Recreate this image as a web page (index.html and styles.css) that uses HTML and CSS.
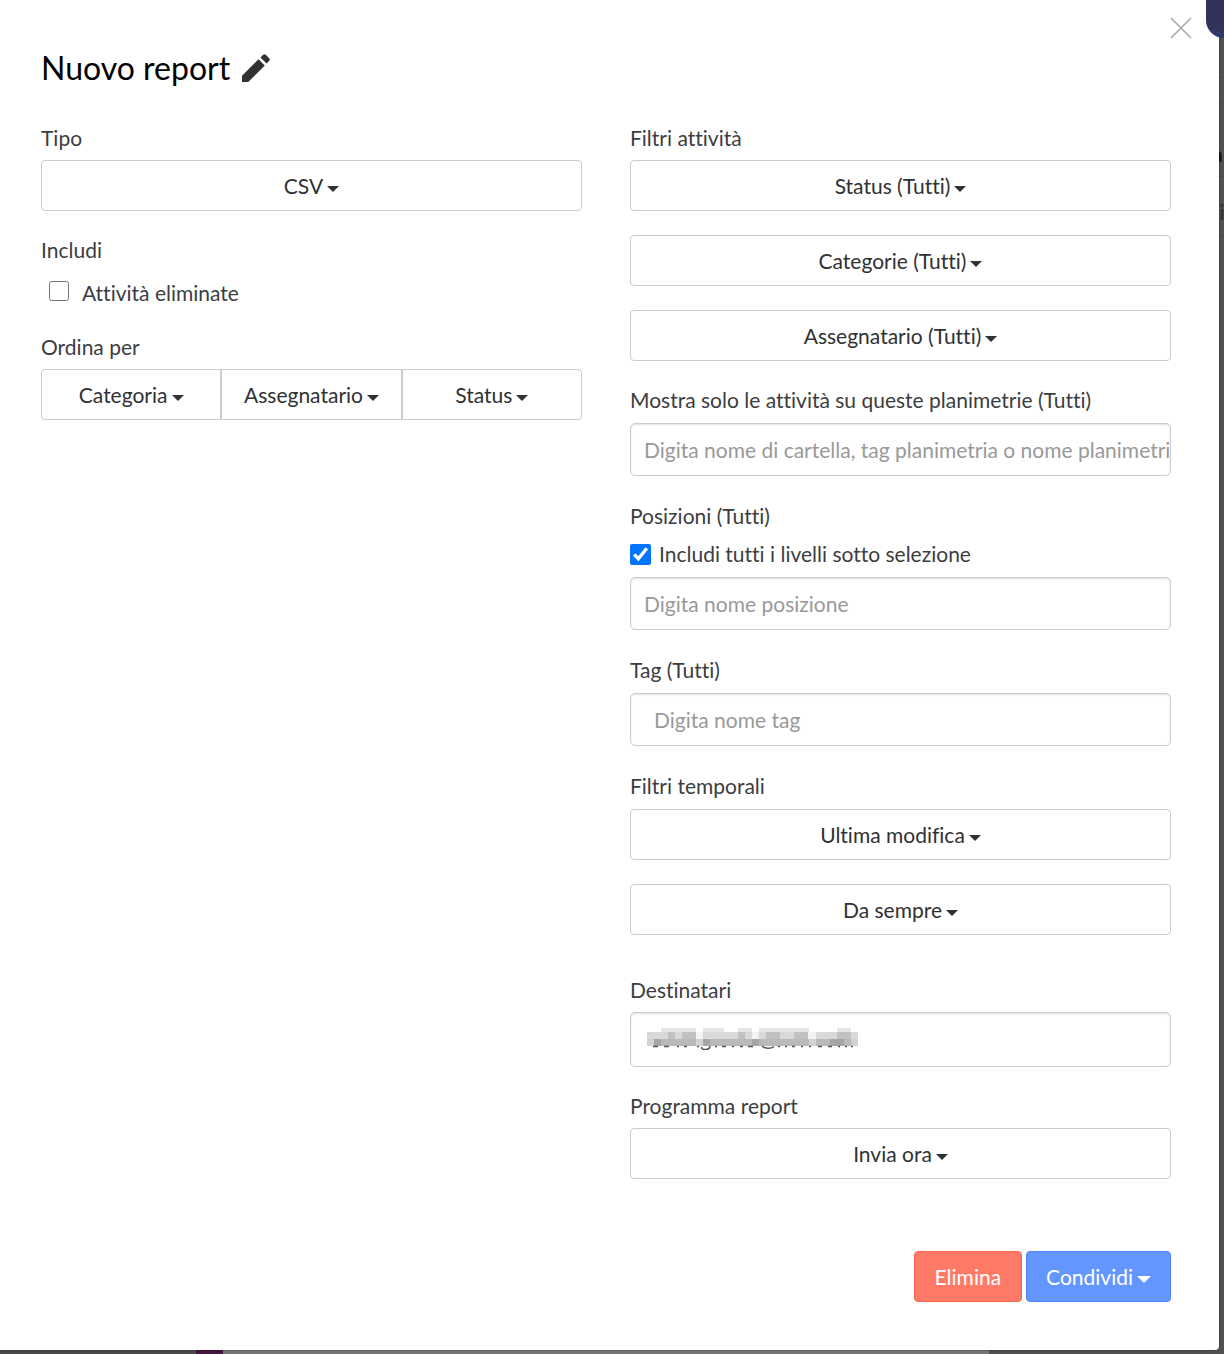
FILE: index.html
```html
<!DOCTYPE html>
<html lang="it">
<head>
    <meta charset="UTF-8">
    <meta name="viewport" content="width=device-width, initial-scale=1.0">
    <title>Nuovo report</title>
    <link rel="stylesheet" href="styles.css">
</head>
<body>

    <!-- pagina dietro la finestra -->
    <div class="backdrop" aria-hidden="true">
        <div class="side">
            <div class="side-row row-top"></div>
            <div class="side-row row-gap"></div>
            <div class="side-row row-name"><b>a</b></div>
            <div class="side-row row-text">ti</div>
        </div>
        <div class="bottom">
            <div class="bottom-nav"></div>
            <div class="bottom-active"></div>
            <div class="bottom-list"></div>
        </div>
    </div>

    <div class="modal" role="dialog" aria-labelledby="title">
        <button type="button" class="close" aria-label="Chiudi">
            <svg width="22" height="22" viewBox="0 0 22 22"><path d="M1 1L21 21M21 1L1 21" stroke="#a9a9a9" stroke-width="1.6" fill="none"/></svg>
        </button>

        <div class="modal-header">
            <h1 id="title">Nuovo report</h1>
            <button type="button" class="edit" aria-label="Modifica nome">
                <svg width="28" height="28" viewBox="0 0 28 28" fill="#303133"><path d="M0 28V21.8L16.6 5.2L22.8 11.4L6.2 28ZM18.4 3.4L21.2 .8Q22.6 -.4 23.8 .8L27.2 4.2Q28.4 5.4 27.2 6.8L24.6 9.6Z"/></svg>
            </button>
        </div>

        <form class="columns">
            <div class="column">
                <div class="group">
                    <label for="type">Tipo</label>
                    <button type="button" class="btn" id="type" aria-haspopup="true">CSV<span class="caret"></span></button>
                </div>
                <div class="group">
                    <div class="heading">Includi</div>
                    <div class="check check-indent">
                        <input type="checkbox" id="deleted">
                        <label for="deleted">Attività eliminate</label>
                    </div>
                </div>
                <div class="group">
                    <div class="heading">Ordina per</div>
                    <div class="btn-group">
                        <button type="button" class="btn" aria-haspopup="true">Categoria<span class="caret"></span></button>
                        <button type="button" class="btn" aria-haspopup="true">Assegnatario<span class="caret"></span></button>
                        <button type="button" class="btn" aria-haspopup="true">Status<span class="caret"></span></button>
                    </div>
                </div>
            </div>

            <div class="column">
                <div class="group stack">
                    <div class="heading">Filtri attività</div>
                    <button type="button" class="btn" aria-haspopup="true">Status (Tutti)<span class="caret"></span></button>
                    <button type="button" class="btn" aria-haspopup="true">Categorie (Tutti)<span class="caret"></span></button>
                    <button type="button" class="btn" aria-haspopup="true">Assegnatario (Tutti)<span class="caret"></span></button>
                </div>
                <div class="group group-input">
                    <label for="plans">Mostra solo le attività su queste planimetrie (Tutti)</label>
                    <input type="text" class="field" id="plans" placeholder="Digita nome di cartella, tag planimetria o nome planimetria">
                </div>
                <div class="group group-input">
                    <label for="position">Posizioni (Tutti)</label>
                    <div class="check">
                        <input type="checkbox" id="levels" checked>
                        <label for="levels">Includi tutti i livelli sotto selezione</label>
                    </div>
                    <input type="text" class="field" id="position" placeholder="Digita nome posizione">
                </div>
                <div class="group group-input">
                    <label for="tag">Tag (Tutti)</label>
                    <input type="text" class="field field-tag" id="tag" placeholder="Digita nome tag">
                </div>
                <div class="group stack group-time">
                    <div class="heading">Filtri temporali</div>
                    <button type="button" class="btn" aria-haspopup="true">Ultima modifica<span class="caret"></span></button>
                    <button type="button" class="btn" aria-haspopup="true">Da sempre<span class="caret"></span></button>
                </div>
                <div class="group">
                    <label for="recipients">Destinatari</label>
                    <div class="recipients">
                        <input type="text" class="field" id="recipients">
                        <!-- indirizzo oscurato -->
                        <svg class="masked" width="212" height="22" viewBox="0 0 212 22" shape-rendering="crispEdges">
                            <path fill="#d9d9d9" d="M0 4H211V11H0Z"/>
                            <path fill="#b9b9b9" d="M0 11H211V18H0Z"/>
                            <path fill="#e6e6e6" d="M14 0H49V4H14ZM56 0H77V4H56ZM91 0H105V4H91ZM112 0H162V4H112ZM190 0H204V4H190Z"/>
                            <path fill="#c1c1c1" d="M21 4H28V11H21ZM35 4H49V11H35ZM91 4H98V11H91ZM119 4H133V11H119ZM147 4H161V11H147ZM190 4H204V11H190Z"/>
                            <path fill="#f3f3f3" d="M49 4H56V11H49ZM105 4H112V11H105ZM161 4H169V11H161Z"/>
                            <path fill="#a5a5a5" d="M7 11H14V18H7ZM56 11H63V18H56ZM105 11H112V18H105ZM183 11H197V18H183Z"/>
                            <path fill="#d2d2d2" d="M0 11H7V18H0ZM49 11H56V18H49ZM162 11H169V18H162ZM204 11H211V18H204Z"/>
                            <path stroke="#555" stroke-width="1.5" fill="none" shape-rendering="auto" d="M6 18.5H11M17 18.5H22M30 18.5H32M37 18.5H40M50 18.5H52M55 19C53 22 63 23 63 18M68 18.5H70M75 18.5H79M85 18.5H87M93 18.5H96M101 18.5H106M115 18C118 21 124 21 127 18.5M131 18.5H133M138 18.5H140M145 18.5H148M154 18.5H156M162 18.5H164M171 18.5H175M181 18.5H185M191 18.5H193M198 18.5H200M204 18.5H206"/>
                        </svg>
                    </div>
                </div>
                <div class="group">
                    <label for="schedule">Programma report</label>
                    <button type="button" class="btn" id="schedule" aria-haspopup="true">Invia ora<span class="caret"></span></button>
                </div>
            </div>
        </form>

        <div class="modal-footer">
            <button type="button" class="btn btn-danger">Elimina</button>
            <button type="button" class="btn btn-primary" aria-haspopup="true">Condividi<span class="caret"></span></button>
        </div>
    </div>

    <div class="chat" aria-hidden="true"></div>

</body>
</html>
```

FILE: styles.css
```css
* {
    box-sizing: border-box;
}
body {
    margin: 0;
    padding: 0 5px 4px 0;
    position: relative;
    overflow-x: hidden;
    background-color: #505050;
    color: #3c3d3f;
    font-family: Lato, "Liberation Sans", sans-serif;
    font-size: 21px;
    line-height: 30px;
    font-variant-ligatures: none;
}
button, input {
    font: inherit;
    font-variant-ligatures: none;
    color: inherit;
}

/* pagina dietro la finestra */
.backdrop {
    position: absolute;
    top: 0;
    right: 0;
    bottom: 0;
    left: 0;
    overflow: hidden;
}
.side {
    position: absolute;
    top: 0;
    right: 0;
    width: 12px;
    color: #2c2c2c;
}
.side-row {
    border-bottom: 1px solid #444747;
    overflow: hidden;
}
.row-top {
    height: 78px;
}
.row-gap {
    height: 25px;
}
.row-name {
    height: 74px;
    padding-top: 36px;
    color: #161616;
}
.row-text {
    height: 60px;
    padding-top: 20px;
}
.bottom {
    position: absolute;
    right: 0;
    bottom: 0;
    left: 0;
    height: 8px;
    display: flex;
}
.bottom-nav {
    width: 16%;
    background-color: #4a4a4a;
}
.bottom-active {
    width: 27px;
    background-color: #43173f;
}
.bottom-list {
    width: 766px;
    background-color: #757575;
}
.chat {
    position: absolute;
    top: 0;
    right: 0;
    width: 18px;
    height: 38px;
    border-radius: 0 0 0 18px;
    background-color: #333359;
    border-bottom: 6px solid #2e386b;
}

/* finestra */
.modal {
    position: relative;
    padding: 48px 48px 48px 41px;
    background-color: #fff;
    border-radius: 0 0 4px 0;
    box-shadow: 0 0 2px rgba(0, 0, 0, 0.5);
}
.close {
    position: absolute;
    top: 17px;
    right: 27px;
    padding: 0;
    border: none;
    background: none;
    cursor: pointer;
}
.close svg, .edit svg {
    display: block;
}
.modal-header {
    display: flex;
    align-items: center;
    gap: 12px;
    margin-bottom: 35px;
}
.modal-header h1 {
    margin: 0;
    font-size: 32px;
    font-weight: normal;
    line-height: 40px;
    color: #000;
}
.edit {
    padding: 0;
    border: none;
    background: none;
    cursor: pointer;
}
.columns {
    display: flex;
    gap: 48px;
}
.column {
    flex: 1;
    min-width: 0;
}
.group {
    margin-bottom: 24px;
}
.group > label, .heading {
    display: block;
    margin-bottom: 7px;
}
.group-input {
    margin-bottom: 25px;
}
.group-input > label, .group-time .heading {
    margin-bottom: 8px;
}
.group-time {
    margin-bottom: 40px;
}
.column .group:last-child {
    margin-bottom: 0;
}
.stack .btn + .btn {
    margin-top: 24px;
}

.btn {
    display: block;
    width: 100%;
    padding: 10px 19px;
    line-height: 29px;
    text-align: center;
    white-space: nowrap;
    color: #303133;
    background-color: #fff;
    border: 1px solid #ccc;
    border-radius: 4px;
    cursor: pointer;
}
.caret {
    display: inline-block;
    margin-left: 4px;
    vertical-align: middle;
    border-top: 6px solid;
    border-right: 6px solid transparent;
    border-left: 6px solid transparent;
}
.btn-group {
    display: flex;
}
.btn-group .btn {
    flex: 1;
    padding-right: 0;
    padding-left: 0;
    border-radius: 0;
}
.btn-group .btn:first-child {
    border-radius: 4px 0 0 4px;
}
.btn-group .btn:last-child {
    border-radius: 0 4px 4px 0;
}

.check {
    display: flex;
    align-items: center;
    gap: 8px;
    margin: 8px 0;
}
.check input {
    width: 21px;
    height: 21px;
    margin: 0;
    accent-color: #0075ff;
}
.check-indent {
    gap: 13px;
    margin: 13px 0 0 8px;
}
.check-indent input {
    width: 20px;
    height: 20px;
    margin-bottom: 5px;
}

.field {
    display: block;
    width: 100%;
    height: 53px;
    padding: 0 0 0 13px;
    background-color: #fff;
    border: 1px solid #ccc;
    border-radius: 5px;
    box-shadow: inset 0 1px 2px rgba(0, 0, 0, 0.12);
}
.field::placeholder {
    color: #999;
}
.field-tag {
    padding-left: 23px;
}
.recipients {
    position: relative;
}
.recipients .field {
    height: 55px;
}
.masked {
    position: absolute;
    top: 16px;
    left: 17px;
}

.modal-footer {
    display: flex;
    justify-content: flex-end;
    gap: 4px;
    margin-top: 72px;
}
.modal-footer .btn {
    width: auto;
    color: #fff;
}
.modal-footer .btn-danger {
    padding-right: 20px;
    padding-left: 20px;
    background-color: #ff7a66;
    border-color: #ff6650;
}
.modal-footer .btn-primary {
    background-color: #6496ff;
    border-color: #4a84ff;
}
.modal-footer .caret {
    border-width: 7px 7px 0;
}
```
